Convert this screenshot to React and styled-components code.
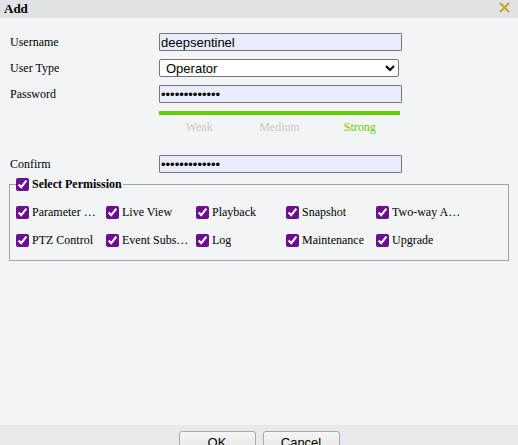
import React from "react";
import styled, { createGlobalStyle } from "styled-components";

const Global = createGlobalStyle`
  html, body { margin: 0; padding: 0; overflow: hidden; background: #f3f4f6; }
  * { box-sizing: border-box; }
`;

const Dialog = styled.div`
  width: 518px;
  height: 460px;
  display: flex;
  flex-direction: column;
  background: #f3f4f6;
  font-family: "Liberation Serif", "Times New Roman", serif;
  color: #000;
`;

const Header = styled.div`
  height: 18px;
  flex: none;
  display: flex;
  align-items: center;
  justify-content: space-between;
  padding: 0 8px 0 4px;
  background: #e1e2e6;
  font-size: 13px;
  font-weight: bold;
  line-height: 18px;
`;

const Close = styled.button`
  border: 0;
  background: none;
  padding: 0;
  width: 11px;
  height: 11px;
  display: flex;
  margin-top: -4px;
  cursor: pointer;
`;

const Body = styled.div`
  flex: 1;
  padding: 15px 10px 0 10px;
`;

const Form = styled.div`
  display: grid;
  grid-template-columns: 149px 243px;
  row-gap: 8px;
  align-items: center;
`;

const Label = styled.label`
  font-size: 12px;
  line-height: 18px;
`;

const TextInput = styled.input`
  width: 243px;
  height: 18px;
  margin: 0;
  padding: 0 1px;
  border: 1px solid #767676;
  border-radius: 1px;
  background: #e9ecfc;
  font-family: "Liberation Sans", Arial, sans-serif;
  font-size: 13px;
  color: #000;
  outline: none;
`;

const Select = styled.select`
  width: 240px;
  height: 18px;
  margin: 0;
  padding: 0 0 0 2px;
  border: 1px solid #767676;
  border-radius: 2px;
  background: #fff;
  font-family: "Liberation Sans", Arial, sans-serif;
  font-size: 13px;
  color: #000;
`;

const Strength = styled.div`
  grid-column: 2;
  width: 241px;
  display: flex;
  flex-direction: column;
  margin-bottom: 12px;
`;

const Bar = styled.div`
  height: 4px;
  background: #66cc00;
`;

const Levels = styled.div`
  display: grid;
  grid-template-columns: repeat(3, 1fr);
  margin-top: 4px;
  font-size: 12px;
  line-height: 16px;
  text-align: center;
`;

const Level = styled.span`
  color: ${(p) => (p.$active ? "#66cc00" : "#c9c9c9")};
`;

const Fieldset = styled.fieldset`
  margin: 5px -1px 0;
  padding: 12px 6px 11px;
  border: 1px solid #a3a3a3;
  min-width: 0;
`;

const Legend = styled.legend`
  padding: 0 1px 0 0;
  display: flex;
  align-items: center;
  gap: 3px;
  font-size: 12px;
  font-weight: bold;
  line-height: 13px;
`;

const Check = styled.input.attrs({ type: "checkbox" })`
  width: 13px;
  height: 13px;
  margin: 0;
  flex: none;
  accent-color: #6b0f8f;
`;

const Grid = styled.div`
  display: grid;
  grid-template-columns: repeat(5, 90px);
  row-gap: 10px;
`;

const Item = styled.label`
  display: flex;
  align-items: center;
  gap: 3px;
  height: 18px;
  font-size: 12px;
`;

const ItemText = styled.span`
  max-width: 70px;
  white-space: nowrap;
  overflow: hidden;
  text-overflow: ellipsis;
`;

const Footer = styled.div`
  height: 35px;
  flex: none;
  display: flex;
  justify-content: center;
  gap: 7px;
  padding-top: 6px;
  background: #e8e9ec;
`;

const Button = styled.button`
  width: 77px;
  height: 23px;
  margin: 0;
  border: 1px solid #a9a9a9;
  border-radius: 3px;
  background: linear-gradient(#f6f6f6, #e3e3e3);
  font-family: "Liberation Sans", Arial, sans-serif;
  font-size: 13px;
  color: #000;
  padding: 0;
`;

const perms = [
  "Parameter Setup",
  "Live View",
  "Playback",
  "Snapshot",
  "Two-way Audio",
  "PTZ Control",
  "Event Subscription",
  "Log",
  "Maintenance",
  "Upgrade",
];

export default function App() {
  return (
    <>
      <Global />
      <Dialog>
        <Header>
          <span>Add</span>
          <Close aria-label="close">
            <svg width="11" height="11" viewBox="0 0 11 11">
              <path d="M1 1L10 10M10 1L1 10" stroke="#c9a22e" strokeWidth="2" />
            </svg>
          </Close>
        </Header>
        <Body>
          <Form>
            <Label>Username</Label>
            <TextInput defaultValue="deepsentinel" />
            <Label>User Type</Label>
            <Select defaultValue="Operator">
              <option>Operator</option>
              <option>User</option>
            </Select>
            <Label>Password</Label>
            <TextInput type="password" defaultValue="aaaaaaaaaaaaa" />
            <Strength>
              <Bar />
              <Levels>
                <Level>Weak</Level>
                <Level>Medium</Level>
                <Level $active>Strong</Level>
              </Levels>
            </Strength>
            <Label>Confirm</Label>
            <TextInput type="password" defaultValue="aaaaaaaaaaaaa" />
          </Form>
          <Fieldset>
            <Legend>
              <Check defaultChecked />
              <span>Select Permission</span>
            </Legend>
            <Grid>
              {perms.map((p) => (
                <Item key={p}>
                  <Check defaultChecked />
                  <ItemText>{p}</ItemText>
                </Item>
              ))}
            </Grid>
          </Fieldset>
        </Body>
        <Footer>
          <Button>OK</Button>
          <Button>Cancel</Button>
        </Footer>
      </Dialog>
    </>
  );
}
